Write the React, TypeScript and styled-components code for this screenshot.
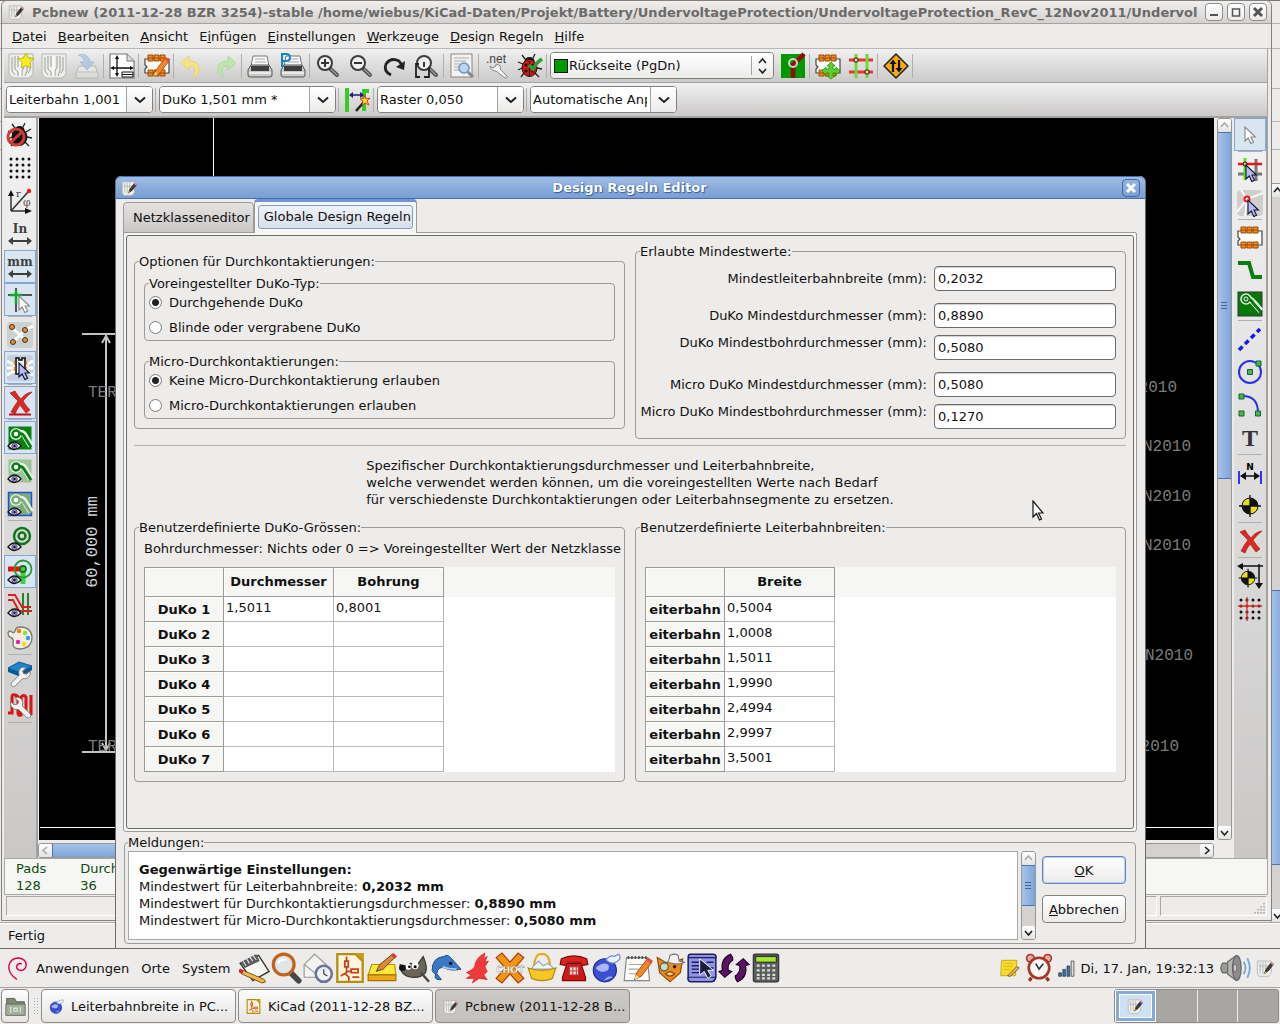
import React from "react";
import styled, { createGlobalStyle, css } from "styled-components";

const Global = createGlobalStyle`
  * { box-sizing: border-box; }
  html, body { margin: 0; height: 100%; }
  body { font: 13px/17px "DejaVu Sans", sans-serif; color: #111; background: #edecea; overflow: hidden; }
  button, input, select { font: inherit; color: inherit; margin: 0; }
  button { padding: 0; }
`;

const line = "#9c9b99";

/* ---------- icon drawings ---------- */

const Svg = styled.svg<{ $size: number }>`
  width: ${(p) => p.$size}px;
  height: ${(p) => p.$size}px;
  flex: none;
  display: block;
  overflow: visible;
`;

const Cursor = ({ fill = "#bcbcf2", edge = "#111133", at = "translate(10 8)" }: { fill?: string; edge?: string; at?: string }) => (
  <path transform={at} d="M0 0v14l3.2-3 2.6 5.6 2.8-1.4L6 10h4.4z" fill={fill} stroke={edge} strokeWidth="1.1" />
);

const Eye = () => (
  <g>
    <path d="M1 21q6.500-8 13 0q-6.500 7-13 0z" fill="#fff" stroke="#111" strokeWidth="1.300" />
    <circle cx="7.500" cy="21" r="2.800" fill="#9a8fe8" stroke="#223" strokeWidth=".6" />
    <circle cx="7.500" cy="21" r="1.200" fill="#111" />
  </g>
);

const Footprint = () => (
  <g>
    <path d="M1 6h24v14H1v-4l2-2-2-2z" fill="#fff" stroke="#444" strokeWidth="1.200" />
    {[4, 10, 16].map((x) => (
      <g key={x} fill="#f58a1e" stroke="#9a4b05" strokeWidth="1">
        <path d={`M${x} 2h5v6h-5zM${x} 17h5v6h-5z`} />
        <path d={`M${x} 5h5M${x} 20h5`} />
      </g>
    ))}
  </g>
);

const Board = () => (
  <g>
    <path d="M1 1h24v20l-4 4H5l-4-4z" fill="#eeeeec" stroke="#b5b5b2" />
    <path d="M4 4v14l3 4M7 3v13l3 3v4M10 3v11M16 3v11l-2 4v5M19 3v15l-2 5M22 4v13l-2 3" fill="none" stroke="#9b9d99" strokeWidth="1" />
    <path d="M12.500 3v20" stroke="#fff" strokeWidth="1.500" />
  </g>
);

const Printer = () => (
  <g>
    <path d="M6 3h14l2 10H4z" fill="#fafafa" stroke="#777" />
    <path d="M8 6h10M8 9h11" stroke="#aaa" />
    <path d="M4 12h18l3 5v5q0 2-2 2H3q-2 0-2-2v-5z" fill="#c9cac7" stroke="#555" />
    <path d="M4 13h18v5H4z" fill="#3c3f3e" />
    <path d="M2 20h22" stroke="#f4f4f4" strokeWidth="1.500" />
  </g>
);

const Lens = ({ children }: { children?: React.ReactNode }) => (
  <g>
    <path d="M14.500 15L22 22" stroke="#4a4d4b" strokeWidth="4" strokeLinecap="round" />
    <path d="M16 16l6 6" stroke="#999" strokeWidth="1.500" strokeLinecap="round" />
    <circle cx="10" cy="10" r="7" fill="#f1f1f0" stroke="#3a3d3c" strokeWidth="2" />
    {children}
  </g>
);

const Bug = ({ body }: { body: string }) => (
  <g>
    <path d="M8 6L5 2M16 5l2-4M6 11L1 9M5 15l-4 2M7 20l-3 4M19 10l5-3M20 15l5 1M18 20l4 4" stroke="#222" strokeWidth="1.300" fill="none" />
    <ellipse cx="12.500" cy="8" rx="5" ry="4" fill="#111" />
    <ellipse cx="12.500" cy="15" rx="7.500" ry="8.500" fill={body} stroke="#111" />
    <path d="M12.500 8v15" stroke="#111" />
    <g fill="#111"><circle cx="9" cy="12" r="1.500" /><circle cx="16" cy="12" r="1.500" /><circle cx="9" cy="18" r="1.500" /><circle cx="16" cy="18" r="1.500" /></g>
  </g>
);

const Wrench = () => (
  <path d="M4 25q-3-1-1-4l9-9q-2-6 3-9 3-1 5 0l-4 4 1 3 4 1 4-4q1 5-3 8-3 2-6 1L7 25q-2 1-3 0z" fill="#f4f4f3" stroke="#777" />
);

const Zone = ({ bg, track, edge = "none" }: { bg: string; track: string; edge?: string }) => (
  <g>
    <rect x="1.500" y="1.500" width="23" height="23" fill={bg} stroke={edge} strokeWidth="1.500" />
    <path d="M12 8q4-1 6 3l6 10" fill="none" stroke="#e8f4e8" strokeWidth="6" />
    <circle cx="9" cy="9" r="6" fill="#e8f4e8" />
    <path d="M11 8q4 0 6 3l7 11" fill="none" stroke={track} strokeWidth="3" />
    <circle cx="9" cy="9" r="3.500" fill="#fff" stroke={track} strokeWidth="2.500" />
  </g>
);

const Sight = () => (
  <g>
    <circle cx="13" cy="13" r="8" fill="#111" />
    <path d="M13 5v8H5a8 8 0 018-8zM13 21v-8h8a8 8 0 01-8 8z" fill="#e6dd1f" />
    <path d="M13 2v22M2 13h22" stroke="#111" strokeWidth="1.300" />
    <circle cx="13" cy="13" r="8" fill="none" stroke="#111" />
  </g>
);

const RedCross = () => (
  <path d="M3 4l5-2q2 4 6 8Q18 4 25 3q-5 4-9 9 3 5 7 9l-4 3q-3-4-6-8-3 4-5 9l-4-2q3-6 7-11Q7 8 3 4z" fill="#d92b22" stroke="#a30d0b" strokeWidth=".6" />
);

const Arrows = ({ label }: { label: string }) => (
  <g>
    <text x="13" y="12" textAnchor="middle" fontFamily="DejaVu Serif, serif" fontWeight="700" fontSize="12" fill="#3c3f3e">{label}</text>
    <path d="M3 20h20" stroke="#3c3f3e" strokeWidth="2" />
    <path d="M6 16l-5 4 5 4zM20 16l5 4-5 4z" fill="#3c3f3e" />
  </g>
);

const Grid = ({ color = "#111" }: { color?: string }) => (
  <g fill={color}>
    {[4, 10, 16, 22].map((y) => [4, 10, 16, 22].map((x) => <circle key={`${x}-${y}`} cx={x} cy={y} r="1.500" />))}
  </g>
);

const Pencil = () => (
  <g>
    <path d="M10 23l2-6L21 5l4 3-9 12z" fill="#f4862a" stroke="#9a4b05" strokeWidth=".8" />
    <path d="M10 23l1-4 3 2z" fill="#f7deb0" />
    <path d="M20 6l2-2 4 3-2 2z" fill="#e34a4a" />
  </g>
);

const glyphs: Record<string, React.ReactNode> = {
  newBoard: <><Board /><path d="M18 0l2.500 5 5.500.5-4 4 1 5.500-5-2.500L13 15l1-5.500-4-4 5.500-.5z" fill="#f7ee22" stroke="#b9a900" strokeWidth=".8" /></>,
  openBoard: <Board />,
  save: <g opacity=".5"><path d="M5 13L2 20v5h22v-5l-3-7z" fill="#f2f2f0" stroke="#999" /><path d="M2 19h22v6H2z" fill="#e6e6e4" stroke="#aaa" /><path d="M4 2q10-3 12 7h4l-7 8-7-8h4q0-5-6-7z" fill="#8fb3e0" stroke="#6a92c4" strokeWidth=".8" /></g>,
  page: <><path d="M1 1h17l7 7v17H1z" fill="#fcfcfc" stroke="#777" strokeWidth="1.200" /><path d="M18 1v7h7" fill="#ddd" stroke="#777" /><path d="M8 4v18M3 15h20" stroke="#111" strokeWidth="1.300" /><path d="M6 6l2-4 2 4zM6 20l2 4 2-4zM5 13l-4 2 4 2zM21 13l4 2-4 2z" fill="#111" /><path d="M13 19h11v5H13zM13 21.500h11" fill="#fff" stroke="#111" /></>,
  moduleEdit: <><Footprint /><Pencil /></>,
  undo: <path d="M10 3L2 10l8 7v-4q7-1 6 6 0 3-3 5 7-1 7-8 0-8-10-8z" fill="#f7e48a" stroke="#e6cc6a" strokeWidth=".8" />,
  redo: <path d="M16 3l8 7-8 7v-4q-7-1-6 6 0 3 3 5-7-1-7-8 0-8 10-8z" fill="#bfe6b0" stroke="#a4d68e" strokeWidth=".8" />,
  print: <Printer />,
  plot: <><Printer /><path d="M2 14V1h4q4 0 4 3.500T6 8H3" fill="none" stroke="#1583c4" strokeWidth="2" /></>,
  zoomIn: <Lens><path d="M6 10h8M10 6v8" stroke="#333" strokeWidth="2" /></Lens>,
  zoomOut: <Lens><path d="M6 10h8" stroke="#333" strokeWidth="2" /></Lens>,
  refresh: <><path d="M10 22Q2 18 5 11q5-7 13-3l3 4" fill="none" stroke="#222" strokeWidth="2.800" /><path d="M24 8l-1 9-8-3z" fill="#222" /></>,
  zoomFit: <><Lens /><path d="M10 14V9M5 11H2v13h4M10 24h5V14" fill="none" stroke="#222" strokeWidth="1.800" /></>,
  find: <><rect x="2" y="1" width="21" height="23" fill="#f2f2f1" stroke="#888" /><path d="M5 5h15M5 8h12M5 11h6M5 14h5M5 17h5" stroke="#aaa" /><circle cx="15" cy="15" r="5" fill="#bcd6f2" stroke="#6f93bd" strokeWidth="1.500" /><path d="M19 19l5 5" stroke="#888" strokeWidth="3" /></>,
  netlist: <><text x="12" y="10" textAnchor="middle" fontFamily="Liberation Sans, sans-serif" fontSize="12" fill="#444">.net</text><path d="M21 25L12 18q-5 0-6-5l3 2 3-2v-2q6 1 4 5l7 7q1 2-2 2z" fill="#f4f4f3" stroke="#888" /></>,
  drc: <><Bug body="#d4180f" /><path d="M12 12l4 4q3-6 9-10" fill="none" stroke="#2d9e33" strokeWidth="3.500" /></>,
  layerPair: <><rect x="1" y="1" width="24" height="24" fill="#009a00" /><path d="M24 1L13 12v13" fill="none" stroke="#9a0a0a" strokeWidth="4.500" /><circle cx="13" cy="10" r="4" fill="none" stroke="#cdd4cd" strokeWidth="2" /></>,
  modMode: <><Footprint /><path d="M16 9l4 4h-2v3h3v-2l4 4-4 4v-2h-3v3h2l-4 3-4-3h2v-3h-3v2l-4-4 4-4v2h3v-3h-2z" fill="#5ad12c" stroke="#2c8a12" strokeWidth=".8" /></>,
  trackMode: <><path d="M1 7h24M1 19h24" stroke="#f23030" strokeWidth="2.800" /><path d="M8 1v24M19 1v24" stroke="#69dd37" strokeWidth="3" /><circle cx="8" cy="7" r="2.200" fill="#f7c98a" stroke="#111" /><circle cx="19" cy="19" r="2.200" fill="#f7c98a" stroke="#111" /></>,
  sign: <><path d="M13 1l12 12-12 12L1 13z" fill="#f5a914" stroke="#222" strokeWidth="1.500" strokeLinejoin="round" /><path d="M10 19V10M16 7v9" stroke="#111" strokeWidth="2.200" /><path d="M6.500 11L10 6.500l3.500 4.500zM12.500 15l3.500 4.500 3.500-4.500z" fill="#111" /></>,
  autoWidth: <><path d="M3 1v24" stroke="#3acb1e" strokeWidth="4" /><path d="M25 4h-5v20" fill="none" stroke="#3acb1e" strokeWidth="4" /><path d="M6 8h12" stroke="#1b1b8a" strokeWidth="1.500" /><path d="M9 5L5 8l4 3zM16 5l4 3-4 3z" fill="#1b1b8a" /><path d="M12 24l7-8" stroke="#222" strokeWidth="2.500" /><path d="M21 8l1 4 4-1-3 3 2 4-4-2-3 2 1-4-3-2 4-1z" fill="#fbe13a" stroke="#e23b13" /></>,

  drcOff: <><Bug body="#111" /><circle cx="9" cy="15" r="8" fill="none" stroke="#cf3a36" strokeWidth="3" /><path d="M4 20L15 10" stroke="#cf3a36" strokeWidth="3" /></>,
  grid: <Grid />,
  polar: <><path d="M4 23V6M4 23h16M4 23L21 4" stroke="#333" strokeWidth="1.500" fill="none" /><path d="M1 8l3-6 3 6zM18 20l7 3-7 3z" fill="#111" /><circle cx="22" cy="3" r="2.200" fill="#f11" /><text x="9" y="9" fontSize="10" fontFamily="DejaVu Serif, serif" fill="#444">r</text><text x="16" y="18" fontSize="11" fontFamily="DejaVu Serif, serif" fill="#654">φ</text></>,
  inch: <Arrows label="In" />,
  mm: <Arrows label="mm" />,
  cursorShape: <><path d="M9 1v24M1 8h24" stroke="#555" strokeWidth="2" /><path d="M9 3v14M3 8h12" stroke="#17a52c" strokeWidth="2.500" /><Cursor fill="#fff" edge="#888" at="translate(12 9)" /></>,
  ratsnest: <><rect width="26" height="26" rx="4" fill="#c9d2d0" /><path d="M5 6l8 7 5-5M6 20l7-7 5 5M18 8l8-4M13 13l5 5" fill="none" stroke="#fff" strokeWidth="2.800" /><g fill="#f58a1e" stroke="#333"><circle cx="5" cy="5" r="2.500" /><circle cx="18" cy="8" r="2.500" /><circle cx="6" cy="20" r="2.500" /><circle cx="18" cy="18" r="2.500" /></g></>,
  modRats: <><rect width="26" height="26" rx="4" fill="#c6cfdd" /><path d="M0 6l26 14M0 13h26M0 20L26 6" fill="none" stroke="#fff" strokeWidth="3" /><path d="M9 3h3v2h3V3h3v16H9z" fill="#e9edf4" stroke="#111" strokeWidth="1.600" /><path d="M7.500 6v11M19.500 6v8" stroke="#f58a1e" strokeWidth="1.500" strokeDasharray="4 2" /><Cursor at="translate(12 8)" /></>,
  autoDel: <><g transform="translate(0 -1)"><RedCross /></g><path d="M2 24.500h22" stroke="#c01010" strokeWidth="2" /></>,
  zoneFill: <><Zone bg="#0a8212" track="#0a8212" /><Eye /></>,
  zoneHide: <><Zone bg="#9cc49c" track="#0a7a12" /><Eye /></>,
  zoneOutline: <><Zone bg="#7aad7a" track="#7aad7a" edge="#2450d6" /><Eye /></>,
  padSketch: <><circle cx="15" cy="10" r="8" fill="none" stroke="#12761a" strokeWidth="2.500" /><circle cx="15" cy="10" r="3.500" fill="none" stroke="#12761a" strokeWidth="2.500" /><Eye /></>,
  viaSketch: <><path d="M1 10h12" stroke="#f30d0d" strokeWidth="5" /><path d="M16 11v14" stroke="#3bd344" strokeWidth="5" /><circle cx="16" cy="10" r="8.500" fill="none" stroke="#2a9a38" strokeWidth="1.800" /><circle cx="16" cy="10" r="3" fill="#3bd344" stroke="#12761a" strokeWidth="1.800" /><Eye /></>,
  trackSketch: <><path d="M16 1v22M21 1v22" stroke="#167a1c" strokeWidth="1.800" /><path d="M1 3h7l7 12h9M1 8h5l6 11h13" fill="none" stroke="#d9201c" strokeWidth="1.800" /><Eye /></>,
  palette: <><path d="M13 2q11 0 12 10 0 11-12 12-7 0-7-5 1-4-1-6-4-1-4-5 1-3 4-1 2 2 3-1 1-4 5-4z" fill="#f3efe2" stroke="#777" strokeWidth="1.300" /><circle cx="12" cy="6" r="2.200" fill="#f57900" /><circle cx="18" cy="8" r="2.200" fill="#8ae234" /><circle cx="21" cy="13" r="2.200" fill="#28a0e8" /><circle cx="17" cy="19" r="2.200" fill="#f5d90a" /><circle cx="11" cy="17" r="2.200" fill="#ee15b8" /></>,
  layers: <><path d="M1 8l11-6 13 4-11 7z" fill="#1a86cf" stroke="#0d5a90" /><path d="M1 8l13 5 11-7v4l-11 7L1 12z" fill="#0d5a90" /><g transform="translate(2 5) scale(.85)"><Wrench /></g></>,
  tracksTool: <><path d="M1 20h4V4q0-3 3-2t3 2v16q0 3 3 2V4q3-3 5 0v16q1 3 5 1V2" fill="none" stroke="#d91414" strokeWidth="3" /><g transform="translate(26 2) scale(-.9 .9)"><Wrench /></g></>,

  select: <Cursor fill="#fff" edge="#888" at="translate(8 5)" />,
  hilite: <><path d="M19 2v22M1 17h24" stroke="#777" strokeWidth="3" /><path d="M8 1v22" stroke="#4fe61a" strokeWidth="3" /><path d="M1 7h24" stroke="#f31010" strokeWidth="2.500" /><circle cx="8" cy="7" r="2" fill="#f7c98a" stroke="#111" /><Cursor at="translate(9 8)" /></>,
  localRats: <><rect width="26" height="26" rx="4" fill="#cfcfce" /><path d="M10 9L4 0M10 9l16-6M10 9L0 22M10 9l-2 17" stroke="#fff" strokeWidth="1.800" /><circle cx="10" cy="9" r="2.500" fill="#fff" stroke="#f01414" strokeWidth="2" /><Cursor at="translate(11 10)" /></>,
  addModule: <Footprint />,
  addTrack: <path d="M1 5h11l4 14h9" fill="none" stroke="#0b7d12" strokeWidth="4" />,
  addZone: <><rect x="1" y="1" width="24" height="24" fill="#067a08" stroke="#333" /><path d="M11 8q3 0 6 4l7 8" fill="none" stroke="#e8f4e8" strokeWidth="6" /><circle cx="9" cy="8" r="5" fill="#067a08" stroke="#e8f4e8" strokeWidth="1.500" /><path d="M10 8q4 0 6 4l8 9" fill="none" stroke="#067a08" strokeWidth="3" /><circle cx="9" cy="8" r="2" fill="#067a08" stroke="#fff" /></>,
  addLine: <path d="M2 24L23 3" stroke="#0f1fe8" strokeWidth="3.500" strokeDasharray="5 3.500" />,
  addCircle: <><circle cx="13" cy="13" r="11" fill="none" stroke="#2334e8" strokeWidth="2" /><g fill="#43b656" stroke="#1c5e27"><path d="M10.500 10.500h5v5h-5zM19 2h5v5h-5z" /></g></>,
  addArc: <><path d="M4 4q17-1 17 17" fill="none" stroke="#2334e8" strokeWidth="2" /><g fill="#43b656" stroke="#1c5e27"><path d="M2 2h5v5H2zM2 19h5v5H2zM18.500 19h5v5h-5z" /></g></>,
  addText: <text x="13" y="21" textAnchor="middle" fontFamily="Liberation Serif, serif" fontWeight="700" fontSize="24" fill="#333">T</text>,
  dimension: <><path d="M2 11v13M24 11v13" stroke="#3434ee" strokeWidth="2" /><path d="M4 16h18" stroke="#111" strokeWidth="1.500" /><path d="M9 12l-6 4 6 4zM17 12l6 4-6 4z" fill="#111" /><text x="13" y="10" textAnchor="middle" fontSize="9" fontWeight="700" fontFamily="DejaVu Sans, sans-serif">N</text></>,
  target: <Sight />,
  remove: <RedCross />,
  offset: <><g transform="translate(0 4) scale(.85)"><Sight /></g><path d="M3 3h23M22 1v22" stroke="#111" strokeWidth="1.500" /><path d="M6 0L0 3l6 4zM18 20l4 6 4-6z" fill="#111" /></>,
  gridOrigin: <><Grid /><path d="M1 10h24M10 1v24" stroke="#e62a2a" strokeWidth="1.300" /></>,

  pcbnew: <><path d="M2 3h20v17l-4 5H5l-3-4z" fill="#f0f0ee" stroke="#a5a5a2" /><path d="M6 5v16M10 4v18M14 4v18M4 10h14" stroke="#b9b9b6" strokeWidth="1.500" /><path d="M12 21l3-7 7-9 3 3-7 9z" fill="#3b3b39" stroke="#222" /><path d="M12 21l1-3 2 2z" fill="#f4d13b" /><path d="M21 6l2-2 3 2-2 3z" fill="#e28bb5" /></>,
  debian: <path d="M12 24Q3 18 4 10 6 2 14 2q8 1 8 7 0 5-5 6-5 0-5-4 1-4 5-3" fill="none" stroke="#d70751" strokeWidth="1.500" strokeLinecap="round" />,
  tomboy: <><path d="M1 9L17 2l9 14-14 8z" fill="#f7f7f5" stroke="#333" strokeWidth="1.200" /><path d="M1 8L15 1l3 6L5 13z" fill="#5a5a5a" /><path d="M3 6l3 5M6 4l3 5M9 3l3 4M12 2l3 4" stroke="#e4e4e4" /><path d="M1 14l21 9 1 2-3 1L2 18z" fill="#f2b84a" stroke="#7a4a10" strokeWidth=".8" /><path d="M0 14l4 1-1 3-3-1z" fill="#d22" /></>,
  magnify: <><path d="M17 17l7 7" stroke="#46484a" strokeWidth="5" strokeLinecap="round" /><circle cx="11" cy="10" r="9" fill="#dfe6ea" stroke="#c3641c" strokeWidth="2.800" /><path d="M6 9q2-4 7-3" stroke="#fff" strokeWidth="2" fill="none" /></>,
  mailClock: <><path d="M1 10l9-9 10 9v11H1z" fill="#f3f3f1" stroke="#999" /><path d="M1 10l9 7 10-7" fill="none" stroke="#999" /><circle cx="18" cy="18" r="7" fill="#f2f3f8" stroke="#6c7399" strokeWidth="2.200" /><path d="M18 14v4l3 2" stroke="#333" fill="none" /></>,
  kicad: <><path d="M2 1h16l6 6v18H2z" fill="#fff6dc" stroke="#b98c0b" strokeWidth="2" /><path d="M18 0h7v7z" fill="#c99a10" /><path d="M10 3v4M8.500 7h3v5h-3zM10 12v5l-5 3M10 16h4M14 14h6v3h-6zM9 18l3 3v3M15 21h6" fill="none" stroke="#c4411b" strokeWidth="1.500" /></>,
  notes: <><path d="M4 10h20l1 9H1z" fill="#fbe83a" stroke="#b39206" /><path d="M1 19h24v5H1z" fill="#f0a815" stroke="#a86f05" /><path d="M8 16l3-6L22 1l3 2-11 11z" fill="#d98a34" stroke="#6d3c0b" strokeWidth=".8" /><path d="M21 2l2-2 3 3-2 2z" fill="#e4343a" /></>,
  gimp: <><path d="M1 10q5 2 9-1l6 1 5-7q4 9 2 14-4 5-12 4-10-1-10-11z" fill="#6b6459" stroke="#38342e" /><circle cx="8" cy="12" r="2.600" fill="#fff" /><circle cx="14" cy="11" r="3" fill="#fff" /><circle cx="9" cy="12" r="1.200" /><circle cx="14" cy="12" r="1.300" /><ellipse cx="3" cy="13" rx="3" ry="2.500" fill="#111" /><path d="M19 17l7 8" stroke="#444" strokeWidth="2" /></>,
  dolphin: <><path d="M1 15Q1 4 11 3q3-2 5 0 3 3 10 11-9 2-14-1-6-2-7 5l4 5q-7 1-5-5-2 0-3-3z" fill="#3a78c8" stroke="#1c4580" strokeWidth=".8" /><path d="M10 12q5 2 12 2" fill="none" stroke="#a9c9ee" strokeWidth="1.500" /><circle cx="17" cy="9" r="1.500" fill="#111" /></>,
  eagle: <path d="M19 0l-1 5 3-2-2 5 3-1-3 5 2 4-3 3 3 4-7-1-6 4 2-4-7 0 4-3-4-2q5-2 7-5Q11 4 19 0z" fill="#ee3b39" stroke="#c9201f" strokeWidth=".6" />,
  xcross: <><path d="M1 4l5-4 7 8 7-8 5 4-8 9 8 9-5 4-7-8-7 8-5-4 8-9z" fill="#f79412" stroke="#ad3a02" /><text x="13" y="17" textAnchor="middle" fontSize="8" fontWeight="700" fontFamily="DejaVu Sans, sans-serif" fill="#fff" stroke="#777" strokeWidth=".3">CHOT</text></>,
  basket: <><path d="M6 12Q7 0 13 1q6-1 7 10" fill="none" stroke="#e0a81c" strokeWidth="1.800" /><path d="M5 12l5-5 4 4 4-2 6 5H4z" fill="#f4f7fa" stroke="#8aa6c4" /><path d="M1 13q12 4 24 0l-3 9q-9 4-18 0z" fill="#f7c72a" stroke="#b98509" /></>,
  phone: <><path d="M2 5q11-5 22 0l1 5-6 1-1-3H8l-1 3-6-1z" fill="#dd2222" stroke="#7b0808" /><path d="M7 9h12l4 12v3H3v-3z" fill="#cf1717" stroke="#7b0808" /><path d="M9 12h8v7H9zM12 12v7M15 12v7M9 15.500h8" fill="#f7d9d9" stroke="#a33" strokeWidth=".8" /></>,
  globe: <><circle cx="12" cy="15" r="10" fill="#3b4fd2" stroke="#1c2a8c" /><path d="M4 13q6-6 11-3 2 5-3 6-5 1-8-3zM11 24q4-5 8-3" fill="#aab8f8" /><path d="M13 6q4-5 7-3l4-2q3 4-1 6-5 4-10-1z" fill="#eef4ff" stroke="#6f86d8" /></>,
  notepad: <><path d="M3 4h18l2 20H1z" fill="#fbfbfa" stroke="#888" /><path d="M4 4h17" stroke="#444" strokeWidth="2.500" strokeDasharray="1.500 1.500" /><path d="M5 10h12M5 14h9M5 18h7" stroke="#aaa" /><Pencil /></>,
  cat: <><path d="M2 4l7 4h7l8-3-2 12-9 8-9-8z" fill="#ec8b1d" stroke="#8e4805" /><path d="M12 6l1-4q4-2 7 0l1 5q4 1 5 1-6 3-15 0z" fill="#f1f1ef" stroke="#777" /><circle cx="8" cy="12" r="3.500" fill="#bfe0c2" stroke="#555" /><circle cx="17" cy="12" r="1.500" fill="#222" /><path d="M9 18q4 4 8 0l-4-2z" fill="#fbd7a0" stroke="#8e4805" /></>,
  scroll: <><path d="M3 1h20q3 1 2 4v16q-1 4-4 4H3q-3-1-2-5V4q0-3 2-3z" fill="#8f93ee" stroke="#1c1e55" strokeWidth="1.300" /><path d="M1 4h24M1 21h24" stroke="#1c1e55" /><path d="M4 8h7M4 11h7M4 14h7M4 17h7M17 8h6M19 13h4" stroke="#1c1e55" strokeWidth="1.200" /><path d="M11 5v14l4-3 3 6 3-2-3-5h5z" fill="#1c1c3c" stroke="#fff" strokeWidth=".8" /></>,
  cycle: <><path d="M10 1Q1 5 3 15l-3 1 5 5 6-5-3-1q-1-6 4-9 0-3-2-5z" fill="#5a1266" stroke="#1e0324" /><path d="M16 25q9-4 7-14l3-1-5-5-6 5 3 1q1 6-4 9 0 3 2 5z" fill="#5a1266" stroke="#1e0324" /></>,
  calc: <><rect x="2" y="1" width="22" height="24" rx="2" fill="#5b5f5c" stroke="#2d2f2e" /><rect x="4" y="3" width="18" height="5" fill="#a2e832" stroke="#333" />{[11, 15, 19, 22].map((y) => <path key={y} d={`M5 ${y}h16`} stroke="#dcdcda" strokeWidth="2" strokeDasharray="2.500 2" />)}</>,

  sticky: <><path d="M2 3h20l-2 20H1z" fill="#f7dc2c" stroke="#b79b0a" /><path d="M5 7h12M5 11h11M5 15h9" stroke="#c2a31a" strokeDasharray="3 1" /><path d="M10 23l12-12 3 2-12 11z" fill="#e6b877" stroke="#5f4011" /></>,
  alarm: <><path d="M6 22l-2 3M20 22l2 3" stroke="#9c2b20" strokeWidth="3" /><circle cx="5" cy="4" r="3.500" fill="#f0a9a0" stroke="#a8372c" strokeWidth="1.500" /><circle cx="21" cy="4" r="3.500" fill="#f0a9a0" stroke="#a8372c" strokeWidth="1.500" /><circle cx="13" cy="13" r="9.500" fill="#f8f8f6" stroke="#a8372c" strokeWidth="2.500" /><path d="M10 9l3 5 4-5" fill="none" stroke="#333" strokeWidth="1.500" /></>,
  signal: <g stroke="#333"><path d="M1 20h4v5H1zM7 15h4v10H7z" fill="#3b6fb8" /><path d="M13 10h4v15h-4z" fill="#3b6fb8" /><path d="M19 3h4v22h-4z" fill="#ddd" /></g>,
  speaker: <><path d="M3 9q-3 4 0 8h4V9z" fill="#9b9c9a" stroke="#666" /><path d="M7 8l7-5q5 10 0 20l-7-5z" fill="#b3b4b2" stroke="#6d6e6c" /><ellipse cx="14.500" cy="13" rx="3.500" ry="10" fill="#8c8d8b" stroke="#666" /><ellipse cx="13" cy="13" rx="1.500" ry="3" fill="#ccc" stroke="#555" strokeWidth=".6" /><path d="M20 8q3 5 0 10M23 5q4 8 0 16" fill="none" stroke="#7aa6dc" strokeWidth="1.500" /></>,
  folder: <><path d="M2 3h10l2 4h10v16H2z" fill="#7f8875" stroke="#4d5446" /><path d="M1 10h24v14H1z" fill="#a3ad99" stroke="#5c6454" /><path d="M8 14h-1v6h1M18 14h1v6h-1M11 15h4v4h-4z" fill="none" stroke="#e9ece6" strokeWidth="1.300" /></>,
};

const Icon = ({ name, size = 26 }: { name: string; size?: number }) => (
  <Svg $size={size} viewBox="0 0 26 26" aria-hidden="true">{glyphs[name]}</Svg>
);

/* ---------- shared controls ---------- */

const Desktop = styled.div`
  height: 100vh;
  display: grid;
  grid-template-rows: minmax(0, 1fr) auto auto;
`;

const Workspace = styled.div`
  position: relative;
  overflow: hidden;
`;

const Bar = styled.div<{ $vertical?: boolean }>`
  flex: none;
  display: flex;
  flex-direction: ${(p) => (p.$vertical ? "column" : "row")};
  ${(p) => (p.$vertical ? "width" : "height")}: 15px;
  background: #d3d2d0;
  border: 1px solid #979694;
  border-radius: 3px;
`;

const BarButton = styled.button<{ $off?: boolean }>`
  flex: none;
  width: 13px;
  height: 13px;
  display: grid;
  place-items: center;
  border: 0;
  border-radius: 2px;
  background: linear-gradient(#fff, #e4e3e2);
  color: ${(p) => (p.$off ? "#aaa" : "#222")};
`;

const Thumb = styled.div<{ $vertical?: boolean; $share: number }>`
  flex: 0 0 ${(p) => p.$share}%;
  display: grid;
  place-items: center;
  color: #3f6599;
  border: 0 solid #4f76ab;
  border-width: ${(p) => (p.$vertical ? "1px 0" : "0 1px")};
  background: linear-gradient(${(p) => (p.$vertical ? "90deg" : "180deg")}, #a5c3ea, #7ea5d8);
`;

const Track = styled.div<{ $vertical?: boolean }>`
  flex: 1;
  min-height: 0;
  min-width: 0;
  display: flex;
  flex-direction: ${(p) => (p.$vertical ? "column" : "row")};
`;

const arrowPaths = { up: "M1 6l3.500-4L8 6", down: "M1 3l3.500 4L8 3", left: "M6 1L2 4.500 6 8", right: "M3 1l4 3.500L3 8" };

const Arrow = ({ dir }: { dir: keyof typeof arrowPaths }) => (
  <Svg $size={9} viewBox="0 0 9 9" aria-hidden="true">
    <path d={arrowPaths[dir]} fill="none" stroke="currentColor" strokeWidth="1.600" />
  </Svg>
);

const ScrollBar = ({ vertical, share }: { vertical?: boolean; share: number }) => (
  <Bar $vertical={vertical}>
    <BarButton type="button" $off aria-label={vertical ? "Nach oben" : "Nach links"}><Arrow dir={vertical ? "up" : "left"} /></BarButton>
    <Track $vertical={vertical}>
      <Thumb $vertical={vertical} $share={share}>
        {vertical && <Svg $size={7} viewBox="0 0 7 7"><path d="M0 .5h6M0 3.500h6M0 6.500h6" stroke="currentColor" /></Svg>}
      </Thumb>
    </Track>
    <BarButton type="button" aria-label={vertical ? "Nach unten" : "Nach rechts"}><Arrow dir={vertical ? "down" : "right"} /></BarButton>
  </Bar>
);

/* ---------- browser window at the back ---------- */

const BackWindow = styled.div`
  position: absolute;
  inset: 0;
  display: flex;
  flex-direction: column;
  background: #edecea;
  border-top: 1px solid #777;
`;
const BackHead = styled.div`
  height: 182px;
  display: grid;
  grid-template-rows: 23px 25px 40px 33px 28px 1fr;
  > div { border-bottom: 1px solid #b5b4b2; }
  > div:last-child { border: 0; }
`;
const BackBody = styled.div`
  flex: 1;
  min-height: 0;
  display: flex;
  justify-content: flex-end;
  margin-right: -5px;
`;
const BackTrack = styled.div`
  flex: 1;
  display: grid;
  grid-template-rows: 394fr 275fr 44fr;
`;
const BackStatus = styled.div`
  height: 25px;
  padding: 3px 8px;
  border-top: 1px solid #fff;
  outline: 1px solid #a8a7a5;
`;

/* ---------- Pcbnew window ---------- */

const MainWindow = styled.section`
  position: absolute;
  inset: 0 8px 27px 1px;
  display: flex;
  flex-direction: column;
  background: #edecea;
  border: 1px solid #82817f;
  border-radius: 6px 6px 0 0;
`;

const TitleBar = styled.header`
  flex: none;
  height: 23px;
  display: flex;
  align-items: center;
  gap: 4px;
  padding: 0 4px 0 6px;
  border-bottom: 1px solid #a3a2a0;
  border-radius: 6px 6px 0 0;
  background: linear-gradient(#f0efee, #d3d2d0);
`;

const TitleText = styled.h1`
  flex: 1;
  margin: 0 0 0 4px;
  overflow: hidden;
  white-space: nowrap;
  font-size: 13px;
  line-height: 17px;
  font-weight: 700;
  color: #6b6a69;
`;

const FrameButton = styled.button<{ $blue?: boolean }>`
  flex: none;
  width: 18px;
  height: 18px;
  display: grid;
  place-items: center;
  border: 1px solid ${(p) => (p.$blue ? "#44699f" : "#8d8c8a")};
  border-radius: 4px;
  background: ${(p) => (p.$blue ? "linear-gradient(#94b5e2, #7ba0d3)" : "linear-gradient(#fff, #ecebea)")};
  color: ${(p) => (p.$blue ? "#fff" : "#555")};
`;

const MenuBar = styled.nav`
  flex: none;
  height: 25px;
  display: flex;
  align-items: center;
  gap: 11px;
  padding: 0 10px;
  border-bottom: 1px solid #b9b8b6;
`;

const MenuLink = styled.button`
  border: 0;
  background: none;
  line-height: 17px;
`;

const ToolBar = styled.div<{ $last?: boolean }>`
  flex: none;
  height: ${(p) => (p.$last ? 35 : 34)}px;
  display: flex;
  align-items: center;
  margin: 0 3px 0 2px;
  border: solid #a3a2a0;
  border-width: 0 1px ${(p) => (p.$last ? 2 : 1)}px 0;
  background: linear-gradient(#f1f0f0, #cbcac9);
`;

const ToolColumn = styled.div`
  flex: none;
  width: 34px;
  display: flex;
  flex-direction: column;
  border-right: 2px solid #a3a2a0;
  background: linear-gradient(#f3f2f2, #c9c8c7);
`;

const ToolButton = styled.button<{ $on?: boolean; $column?: boolean }>`
  flex: none;
  width: ${(p) => (p.$column ? 32 : 33)}px;
  height: 33px;
  display: grid;
  place-items: center;
  border: 1px solid transparent;
  background: none;
  ${(p) => p.$on && css`border-color: #83a8d8; background: #dae5f2;`}
`;

const Separator = styled.div<{ $column?: boolean }>`
  flex: none;
  ${(p) =>
    p.$column
      ? css`height: 2px; margin: 0 4px; border-top: 1px solid #b0afad;`
      : css`width: 2px; height: 24px; border-left: 1px solid #b0afad;`}
`;

const ComboFrame = styled.div<{ $width: number }>`
  flex: none;
  display: grid;
  width: ${(p) => p.$width}px;
  height: 27px;
  margin: 0 2px;
  border: 1px solid #82817f;
  border-radius: 4px;
  overflow: hidden;
  background: #fff;
  > * { grid-area: 1 / 1; }
`;

const ComboSelect = styled.select<{ $flat?: boolean }>`
  appearance: none;
  width: 100%;
  min-width: 0;
  border: 0;
  outline: 0;
  border-radius: 0;
  padding: 0 29px 0 ${(p) => (p.$flat ? 18 : 2)}px;
  background: ${(p) => (p.$flat ? "linear-gradient(#fff, #ecebea)" : "#fff")};
`;

const ComboArrow = styled.span<{ $flat?: boolean }>`
  justify-self: end;
  width: ${(p) => (p.$flat ? 22 : 26)}px;
  margin: ${(p) => (p.$flat ? 3 : 0)}px 0;
  display: grid;
  place-items: center;
  align-content: center;
  pointer-events: none;
  border-left: 1px solid #a3a2a0;
  background: ${(p) => (p.$flat ? "none" : "linear-gradient(#fff, #ecebea)")};
  color: #222;
`;

const Swatch = styled.span`
  width: 14px;
  height: 14px;
  margin-left: 3px;
  align-self: center;
  border: 1px solid #111;
  background: #009a00;
  pointer-events: none;
  z-index: 1;
`;

const Combo = ({ label, value, width }: { label: string; value: string; width: number }) => (
  <ComboFrame $width={width}>
    <ComboSelect aria-label={label}><option>{value}</option></ComboSelect>
    <ComboArrow>
      <Svg $size={12} viewBox="0 0 12 12"><path d="M1 3.500l5 4.500 5-4.500" fill="none" stroke="currentColor" strokeWidth="2" /></Svg>
    </ComboArrow>
  </ComboFrame>
);

const Work = styled.div`
  flex: 1;
  min-height: 0;
  display: flex;
  margin: 0 3px 0 2px;
`;

const CanvasArea = styled.div`
  flex: 1;
  min-width: 0;
  display: grid;
  grid-template-columns: minmax(0, 1fr) 15px;
  grid-template-rows: minmax(0, 1fr) 15px;
  gap: 3px;
  margin-right: 2px;
  > div { min-height: 0; }
`;

const Canvas = styled.div`
  position: relative;
  overflow: hidden;
  background: #000;
  margin-left: 1px;
`;

const Stroke = styled.i<{ $x: number; $y: number; $w?: number; $h?: number; $dim?: boolean }>`
  position: absolute;
  left: ${(p) => p.$x}px;
  top: ${(p) => p.$y}px;
  width: ${(p) => (p.$w ? `${p.$w}px` : "calc(100% - 1px)")};
  height: ${(p) => p.$h ?? 1}px;
  background: ${(p) => (p.$dim ? "#c4c4c4" : "#fff")};
`;

const CanvasText = styled.span<{ $y: number; $left?: number; $right?: number; $up?: boolean }>`
  position: absolute;
  top: ${(p) => p.$y}px;
  ${(p) => (p.$left !== undefined ? `left: ${p.$left}px;` : `right: ${p.$right}px;`)}
  font: 16px/20px "Liberation Mono", monospace;
  color: #7c7c7c;
  white-space: nowrap;
  ${(p) => p.$up && css`writing-mode: vertical-rl; transform: rotate(180deg); color: #d0d0d0; font-size: 17px;`}
`;

const ArrowHead = styled.svg<{ $x: number; $y: number }>`
  position: absolute;
  left: ${(p) => p.$x}px;
  top: ${(p) => p.$y}px;
  width: 10px;
  height: 10px;
`;

const MessagePanel = styled.dl`
  flex: none;
  height: 37px;
  display: flex;
  gap: 34px;
  margin: 0 3px 0 2px;
  padding: 1px 11px;
  border: 1px solid #a9a8a6;
  background: #f6f6f4;
  color: #0d4a10;
  dt, dd { margin: 0; line-height: 17px; }
`;

const StatusBar = styled.div`
  flex: none;
  height: 25px;
  display: grid;
  grid-template-columns: 1fr 107px;
  gap: 3px;
  padding: 1px 4px 4px;
  > div {
    display: flex;
    justify-content: flex-end;
    align-items: flex-end;
    border: 1px solid;
    border-color: #a9a8a6 #fff #fff #a9a8a6;
  }
`;

type Tool = string | null;
const topTools: Tool[] = ["newBoard", "openBoard", "save", null, "page", null, "moduleEdit", null, "undo", "redo", null, "print", "plot", null, "zoomIn", "zoomOut", "refresh", "zoomFit", null, "find", null, "netlist", "drc", null];
const endTools: Tool[] = ["layerPair", null, "modMode", "trackMode", null, "sign", null];
const leftTools: Tool[] = ["drcOff", "grid", "polar", "inch", "*mm", "*cursorShape", null, "ratsnest", "*modRats", null, "*autoDel", null, "*zoneFill", "zoneHide", "zoneOutline", null, "padSketch", "*viaSketch", "trackSketch", "palette", null, "layers", "tracksTool", null];
const rightTools: Tool[] = ["*select", null, "hilite", "localRats", null, "addModule", "addTrack", "addZone", null, "addLine", "addCircle", "addArc", "addText", null, "dimension", "target", null, "remove", null, "offset", "gridOrigin"];

const Tools = ({ items, column }: { items: Tool[]; column?: boolean }) => (
  <>
    {items.map((item, i) => {
      if (!item) return <Separator key={i} $column={column} />;
      const on = item.startsWith("*");
      const name = item.replace("*", "");
      return (
        <ToolButton key={name} type="button" aria-label={name} $on={on} $column={column}>
          <Icon name={name} />
        </ToolButton>
      );
    })}
  </>
);

/* ---------- design rules dialog ---------- */

const Dialog = styled.section`
  position: absolute;
  inset: 176px 134px 0 115px;
  display: flex;
  flex-direction: column;
  border: solid #6d6c6b;
  border-width: 0 1px;
  border-radius: 6px 6px 0 0;
  background: #edecea;
`;

const DialogTitle = styled.header`
  flex: none;
  height: 23px;
  display: flex;
  align-items: center;
  padding: 0 5px;
  border: solid #456fa8;
  border-width: 1px 0;
  border-radius: 6px 6px 0 0;
  background: linear-gradient(#9fbce6, #789ed2);
  h2 {
    flex: 1;
    margin: 0;
    text-align: center;
    font-size: 13px;
    line-height: 17px;
    color: #fff;
    text-shadow: 0 0 1px #2c5591, 1px 1px 1px #3a62a0;
  }
`;

const Tabs = styled.div`
  flex: none;
  display: flex;
  align-items: flex-end;
  padding-left: 7px;
`;

const Tab = styled.button<{ $on?: boolean }>`
  height: ${(p) => (p.$on ? 34 : 31)}px;
  margin-bottom: -1px;
  padding: ${(p) => (p.$on ? "3px 3px 5px" : "0 3px 0 9px")};
  border: 1px solid ${line};
  border-radius: 4px 4px 0 0;
  background: linear-gradient(#e4e3e2, #c9c8c6);
  ${(p) => p.$on && css`
    border-bottom: 0;
    border-top: 3px solid #6f97cf;
    background: #f6f6f5;
    z-index: 1;
    span {
      display: block;
      padding: 2px 1px 3px 5px;
      border: 1px solid #7f9fc9;
      border-radius: 3px;
      background: linear-gradient(#eef2f8, #d9e0ea);
    }
  `}
`;

const Notebook = styled.div`
  flex: 1;
  min-height: 0;
  margin: 0 8px 0 7px;
  padding: 2px;
  display: flex;
  border: 1px solid ${line};
  border-radius: 0 2px 3px 3px;
  background: #f6f6f5;
`;

const Page = styled.div`
  flex: 1;
  min-width: 0;
  padding: 7px;
  border: 1px solid #6d6c6b;
  border-radius: 3px;
  background: #edecea;
`;

const Pair = styled.div<{ $center?: boolean }>`
  display: grid;
  grid-template-columns: repeat(2, minmax(0, 1fr));
  gap: 10px;
  align-items: ${(p) => (p.$center ? "center" : "stretch")};
`;

const Group = styled.fieldset<{ $inner?: boolean; $top?: number }>`
  min-width: 0;
  margin: 0;
  padding: ${(p) => p.$top ?? 0}px ${(p) => (p.$inner ? "4px 3px" : "9px 9px")};
  border: 1px solid ${line};
  border-radius: 4px;
  > legend {
    padding: 0;
    margin-left: ${(p) => (p.$inner ? 0 : -5)}px;
    line-height: 17px;
  }
`;

const Stack = styled.div`
  display: grid;
  gap: 12px;
`;

const RadioLabel = styled.label`
  display: flex;
  align-items: center;
  gap: 7px;
  height: 20px;
  & + & { margin-top: 5px; }
`;

const Radio = styled.input`
  appearance: none;
  width: 13px;
  height: 13px;
  border: 1px solid #7d7c7a;
  border-radius: 50%;
  background: #fff;
  &:checked { background: radial-gradient(circle, #222 0 3px, #fff 4px); }
`;

const Field = styled.div<{ $second?: boolean }>`
  display: flex;
  justify-content: flex-end;
  align-items: ${(p) => (p.$second ? "flex-start" : "center")};
  gap: 7px;
  margin-top: ${(p) => (p.$second ? 7 : 12)}px;
  white-space: nowrap;
  legend + & { margin-top: 0; }
  label { line-height: ${(p) => (p.$second ? 15 : 17)}px; }
`;

const TextInput = styled.input`
  flex: none;
  width: 182px;
  height: 25px;
  padding: 0 3px;
  border: 1px solid #6d6c6b;
  border-radius: 4px;
  background: #fff;
  box-shadow: inset 0 1px 1px #d0d0d0;
`;

const Rule = styled.hr`
  margin: 6px 0 11px;
  border: 0;
  border-top: 1px solid #b5b4b2;
`;

const Explanation = styled.p`
  width: fit-content;
  margin: 0 auto 11px;
`;

const Hint = styled.p`
  height: 17px;
  margin: 0 0 10px;
  white-space: nowrap;
`;

const Sheet = styled.div`
  background: linear-gradient(#f6f6f4 30px, #fff 30px);
`;

const Table = styled.table`
  table-layout: fixed;
  width: 0;
  border-collapse: separate;
  border-spacing: 0;
  border: solid ${line};
  border-width: 1px 0 0 1px;
  th, td {
    height: 25px;
    padding: 0;
    overflow: hidden;
    white-space: nowrap;
    border: solid #b9b8b6;
    border-width: 0 1px 1px 0;
  }
  thead th { height: 29px; padding: 0 0 2px; }
  th { border-color: ${line}; background: #f6f6f4; box-shadow: inset 1px 1px #fff; }
  td { background: #fff; padding: 0 2px 3px; }
`;

const DataTable = ({ columns, rows }: { columns: string[]; rows: string[][] }) => (
  <Sheet>
    <Table>
      <colgroup>
        <col width={79} />
        {columns.map((c) => <col key={c} width={110} />)}
      </colgroup>
      <thead>
        <tr><th />{columns.map((c) => <th key={c} scope="col">{c}</th>)}</tr>
      </thead>
      <tbody>
        {rows.map(([head, ...cells], i) => (
          <tr key={i}><th scope="row">{head}</th>{cells.map((c, j) => <td key={j}>{c}</td>)}</tr>
        ))}
      </tbody>
    </Table>
  </Sheet>
);

const Messages = styled.fieldset`
  flex: none;
  min-width: 0;
  margin: 2px 9px 4px 8px;
  padding: 0 9px 3px 3px;
  border: 1px solid ${line};
  border-radius: 4px;
  legend { padding: 0; line-height: 17px; }
`;

const MessageRow = styled.div`
  display: flex;
  gap: 3px;
`;

const MessageText = styled.div`
  flex: 1;
  height: 89px;
  padding: 9px 10px;
  overflow: hidden;
  border: 1px solid #a9a8a6;
  background: #fff;
  p { margin: 0; }
`;

const Actions = styled.div`
  display: flex;
  flex-direction: column;
  gap: 11px;
  padding: 5px 0 0 3px;
`;

const PushButton = styled.button<{ $default?: boolean }>`
  width: 84px;
  height: 28px;
  border: 1px solid ${(p) => (p.$default ? "#5f86bd" : "#82817f")};
  border-radius: 4px;
  background: linear-gradient(#fff, #ecebea);
  ${(p) => p.$default && css`box-shadow: inset 0 0 0 1px #b9cfec;`}
`;

const Pointer = styled.svg`
  position: absolute;
  left: 1032px;
  top: 500px;
  width: 12px;
  height: 22px;
`;

/* ---------- desktop panels ---------- */

const Panel = styled.nav`
  height: 39px;
  display: flex;
  align-items: center;
  gap: 8px;
  padding: 0 6px 0 5px;
  border-top: 1px solid #6d6c6b;
  background: #edecea;
`;

const PanelGroup = styled.div<{ $gap?: number }>`
  display: flex;
  align-items: center;
  gap: ${(p) => p.$gap ?? 0}px;
  &:last-child { margin-left: auto; }
`;

const PanelMenu = styled.button`
  display: flex;
  align-items: center;
  gap: 6px;
  border: 0;
  background: none;
`;

const Launcher = styled.button`
  width: 32px;
  height: 32px;
  display: grid;
  place-items: center;
  border: 0;
  background: none;
`;

const TaskBar = styled.footer`
  height: 37px;
  display: flex;
  align-items: center;
  gap: 2px;
  padding: 0 1px;
  border-top: 1px solid #a3a2a0;
  background: #edecea;
`;

const TaskButton = styled.button<{ $on?: boolean; $small?: boolean }>`
  flex: 0 1 ${(p) => (p.$small ? 28 : 195)}px;
  min-width: 0;
  height: 34px;
  display: flex;
  align-items: center;
  justify-content: ${(p) => (p.$small ? "center" : "flex-start")};
  gap: 7px;
  padding: 0 ${(p) => (p.$small ? 0 : 2)}px 0 ${(p) => (p.$small ? 0 : 7)}px;
  overflow: hidden;
  white-space: nowrap;
  border: 1px solid #8d8c8a;
  border-radius: 4px;
  background: ${(p) => (p.$on ? "linear-gradient(#cbc9c7, #c3c0bd)" : "linear-gradient(#fdfdfd, #e6e5e4)")};
`;

const Handle = styled.div`
  width: 5px;
  height: 18px;
  margin: 0 1px 0 2px;
  background: radial-gradient(circle, #a9a8a6 0 1px, transparent 1px) 0 0 / 3px 3px;
`;

const Switcher = styled.div`
  display: grid;
  grid-template-columns: repeat(4, 1fr);
  width: 165px;
  height: 34px;
  margin-left: auto;
  border: 1px solid #8d8c8a;
  border-radius: 3px;
  background: #a9a5a2;
  overflow: hidden;
`;

const Space = styled.button<{ $on?: boolean }>`
  display: grid;
  place-items: center;
  border: 0;
  border-left: 1px solid #edecea;
  background: none;
  &:nth-child(2) { border-left: 0; }
  ${(p) => p.$on && css`
    border: 1px solid #fff;
    background: #cfe0f5;
    box-shadow: inset 0 0 0 3px #86abd9, inset 0 0 0 4px #fff;
  `}
`;

const Menu = ({ text, at = 0 }: { text: string; at?: number }) => (
  <MenuLink type="button">{text.slice(0, at)}<u>{text[at]}</u>{text.slice(at + 1)}</MenuLink>
);

const minimums: [string, string, boolean][] = [
  ["Mindestleiterbahnbreite (mm):", "0,2032", false],
  ["DuKo Mindestdurchmesser (mm):", "0,8890", false],
  ["DuKo Mindestbohrdurchmesser (mm):", "0,5080", true],
  ["Micro DuKo Mindestdurchmesser (mm):", "0,5080", false],
  ["Micro DuKo Mindestbohrdurchmesser (mm):", "0,1270", true],
];

const viaRows = [1, 2, 3, 4, 5, 6, 7].map((n) => [`DuKo ${n}`, n === 1 ? "1,5011" : "", n === 1 ? "0,8001" : ""]);
const trackRows = ["0,5004", "1,0008", "1,5011", "1,9990", "2,4994", "2,9997", "3,5001"].map((v) => ["eiterbahn", v]);
const launchers = ["tomboy", "magnify", "mailClock", "kicad", "notes", "gimp", "dolphin", "eagle", "xcross", "basket", "phone", "globe", "notepad", "cat", "scroll", "cycle", "calc"];
const labels: [number, number][] = [[260, 37], [319, 23], [369, 23], [418, 23], [528, 21], [619, 35]];

const Cross = () => (
  <Svg $size={12} viewBox="0 0 12 12"><path d="M2 2l8 8M10 2l-8 8" stroke="currentColor" strokeWidth="3" /></Svg>
);

export default function App() {
  return (
    <Desktop>
      <Global />
      <Workspace>
        <BackWindow>
          <BackHead><div /><div /><div /><div /><div /><div /></BackHead>
          <BackBody>
            <Bar $vertical>
              <BarButton type="button" aria-label="Nach oben"><Arrow dir="up" /></BarButton>
              <BackTrack><span /><Thumb $vertical $share={100} /><span /></BackTrack>
              <BarButton type="button" aria-label="Nach unten"><Arrow dir="down" /></BarButton>
            </Bar>
          </BackBody>
          <BackStatus>Fertig</BackStatus>
        </BackWindow>

        <MainWindow>
          <TitleBar>
            <Icon name="pcbnew" size={16} />
            <TitleText>Pcbnew (2011-12-28 BZR 3254)-stable /home/wiebus/KiCad-Daten/Projekt/Battery/UndervoltageProtection/UndervoltageProtection_RevC_12Nov2011/Undervol</TitleText>
            <FrameButton type="button" aria-label="Minimieren"><Svg $size={12} viewBox="0 0 12 12"><path d="M2 9h8" stroke="currentColor" strokeWidth="2" /></Svg></FrameButton>
            <FrameButton type="button" aria-label="Maximieren"><Svg $size={12} viewBox="0 0 12 12"><path d="M2.500 3h7v7h-7zM2 3h8" fill="none" stroke="currentColor" strokeWidth="1.500" /></Svg></FrameButton>
            <FrameButton type="button" aria-label="Schließen"><Cross /></FrameButton>
          </TitleBar>
          <MenuBar>
            <Menu text="Datei" /><Menu text="Bearbeiten" /><Menu text="Ansicht" /><Menu text="Einfügen" at={1} />
            <Menu text="Einstellungen" /><Menu text="Werkzeuge" /><Menu text="Design Regeln" /><Menu text="Hilfe" />
          </MenuBar>
          <ToolBar>
            <Tools items={topTools} />
            <ComboFrame $width={224}>
              <Swatch />
              <ComboSelect $flat aria-label="Lage"><option>Rückseite (PgDn)</option></ComboSelect>
              <ComboArrow $flat><Arrow dir="up" /><Arrow dir="down" /></ComboArrow>
            </ComboFrame>
            <Tools items={endTools} />
          </ToolBar>
          <ToolBar $last>
            <Combo label="Leiterbahn" value="Leiterbahn 1,001" width={147} />
            <Separator />
            <Combo label="Durchkontaktierung" value="DuKo 1,501 mm *" width={177} />
            <Separator />
            <Tools items={["autoWidth", null]} />
            <Combo label="Raster" value="Raster 0,050" width={147} />
            <Separator />
            <Combo label="Zoom" value="Automatische Anpassung" width={147} />
          </ToolBar>
          <Work>
            <ToolColumn><Tools items={leftTools} column /></ToolColumn>
            <CanvasArea>
              <Canvas>
                <Stroke $x={174} $y={0} $w={1} $h={80} />
                <Stroke $x={43} $y={215} $w={60} $h={2} $dim />
                <Stroke $x={66} $y={217} $w={2} $h={416} $dim />
                <Stroke $x={43} $y={633} $w={60} $h={2} $dim />
                <ArrowHead $x={62} $y={216} viewBox="0 0 10 10"><path d="M1 9l4-7 4 7" fill="none" stroke="#c4c4c4" strokeWidth="2" /></ArrowHead>
                <ArrowHead $x={62} $y={624} viewBox="0 0 10 10"><path d="M1 1l4 7 4-7" fill="none" stroke="#c4c4c4" strokeWidth="2" /></ArrowHead>
                <Stroke $x={1} $y={709} />
                <CanvasText $left={49} $y={265}>TER</CanvasText>
                <CanvasText $left={49} $y={619}>TER</CanvasText>
                <CanvasText $left={44} $y={378} $up>60,000 mm</CanvasText>
                {labels.map(([y, right]) => <CanvasText key={y} $y={y} $right={right}>N2010</CanvasText>)}
              </Canvas>
              <ScrollBar vertical share={50} />
              <ScrollBar share={50} />
            </CanvasArea>
            <ToolColumn><Tools items={rightTools} column /></ToolColumn>
          </Work>
          <MessagePanel>
            <div><dt>Pads</dt><dd>128</dd></div>
            <div><dt>Durch</dt><dd>36</dd></div>
          </MessagePanel>
          <StatusBar>
            <div />
            <div><Svg $size={13} viewBox="0 0 13 13"><path d="M11 1v11M8 4v8M5 7v5M2 10v2" stroke="#a3a2a0" strokeWidth="1.500" strokeDasharray="1.500 1.500" /></Svg></div>
          </StatusBar>
        </MainWindow>

        <Dialog role="dialog" aria-labelledby="dialog-title">
          <DialogTitle>
            <Icon name="pcbnew" size={16} />
            <h2 id="dialog-title">Design Regeln Editor</h2>
            <FrameButton type="button" $blue aria-label="Dialog schließen"><Cross /></FrameButton>
          </DialogTitle>
          <Tabs role="tablist">
            <Tab type="button" role="tab" aria-selected="false">Netzklasseneditor</Tab>
            <Tab type="button" role="tab" aria-selected="true" $on><span>Globale Design Regeln</span></Tab>
          </Tabs>
          <Notebook>
            <Page>
              <Pair $center>
                <Group $top={5}>
                  <legend>Optionen für Durchkontaktierungen:</legend>
                  <Stack>
                    <Group $inner>
                      <legend>Voreingestellter DuKo-Typ:</legend>
                      <RadioLabel><Radio type="radio" name="via" defaultChecked />Durchgehende DuKo</RadioLabel>
                      <RadioLabel><Radio type="radio" name="via" />Blinde oder vergrabene DuKo</RadioLabel>
                    </Group>
                    <Group $inner>
                      <legend>Micro-Durchkontaktierungen:</legend>
                      <RadioLabel><Radio type="radio" name="micro" defaultChecked />Keine Micro-Durchkontaktierung erlauben</RadioLabel>
                      <RadioLabel><Radio type="radio" name="micro" />Micro-Durchkontaktierungen erlauben</RadioLabel>
                    </Group>
                  </Stack>
                </Group>
                <Group $top={6}>
                  <legend>Erlaubte Mindestwerte:</legend>
                  {minimums.map(([label, value, second], i) => (
                    <Field key={label} $second={second}>
                      <label htmlFor={`min-${i}`}>{label}</label>
                      <TextInput id={`min-${i}`} defaultValue={value} />
                    </Field>
                  ))}
                </Group>
              </Pair>
              <Rule />
              <Explanation>
                Spezifischer Durchkontaktierungsdurchmesser und Leiterbahnbreite,<br />
                welche verwendet werden können, um die voreingestellten Werte nach Bedarf<br />
                für verschiedenste Durchkontaktierungen oder Leiterbahnsegmente zu ersetzen.
              </Explanation>
              <Pair>
                <Group $top={4}>
                  <legend>Benutzerdefinierte DuKo-Grössen:</legend>
                  <Hint>Bohrdurchmesser: Nichts oder 0 =&gt; Voreingestellter Wert der Netzklasse</Hint>
                  <DataTable columns={["Durchmesser", "Bohrung"]} rows={viaRows} />
                </Group>
                <Group $top={4}>
                  <legend>Benutzerdefinierte Leiterbahnbreiten:</legend>
                  <Hint />
                  <DataTable columns={["Breite"]} rows={trackRows} />
                </Group>
              </Pair>
            </Page>
          </Notebook>
          <Messages>
            <legend>Meldungen:</legend>
            <MessageRow>
              <MessageText>
                <p><b>Gegenwärtige Einstellungen:</b></p>
                <p>Mindestwert für Leiterbahnbreite: <b>0,2032 mm</b></p>
                <p>Mindestwert für Durchkontaktierungsdurchmesser: <b>0,8890 mm</b></p>
                <p>Mindestwert für Micro-Durchkontaktierungsdurchmesser: <b>0,5080 mm</b></p>
              </MessageText>
              <ScrollBar vertical share={68} />
              <Actions>
                <PushButton type="button" $default><u>O</u>K</PushButton>
                <PushButton type="button"><u>A</u>bbrechen</PushButton>
              </Actions>
            </MessageRow>
          </Messages>
        </Dialog>
        <Pointer viewBox="0 0 12 22" aria-hidden="true">
          <path d="M1 1v16l3.500-3.500L7.500 20l2-1-3-6H11z" fill="#fff" stroke="#111" strokeWidth="1.200" />
        </Pointer>
      </Workspace>

      <Panel aria-label="Panel">
        <PanelGroup $gap={12}>
          <PanelMenu type="button"><Icon name="debian" size={25} />Anwendungen</PanelMenu>
          <PanelMenu type="button">Orte</PanelMenu>
          <PanelMenu type="button">System</PanelMenu>
        </PanelGroup>
        <PanelGroup>
          {launchers.map((name) => (
            <Launcher key={name} type="button" aria-label={name}><Icon name={name} size={30} /></Launcher>
          ))}
        </PanelGroup>
        <PanelGroup $gap={5}>
          <Icon name="sticky" size={20} />
          <Icon name="alarm" size={28} />
          <Icon name="signal" size={18} />
          <time>Di, 17. Jan, 19:32:13</time>
          <Icon name="speaker" size={32} />
          <Icon name="pcbnew" size={18} />
        </PanelGroup>
      </Panel>

      <TaskBar>
        <TaskButton type="button" $small aria-label="Schreibtisch anzeigen"><Icon name="folder" size={21} /></TaskButton>
        <Handle />
        <TaskButton type="button"><Icon name="globe" size={15} />Leiterbahnbreite in PC...</TaskButton>
        <TaskButton type="button"><Icon name="kicad" size={15} />KiCad (2011-12-28 BZ...</TaskButton>
        <TaskButton type="button" $on><Icon name="pcbnew" size={15} />Pcbnew (2011-12-28 B...</TaskButton>
        <Switcher>
          <Space type="button" $on aria-label="Arbeitsfläche 1"><Icon name="pcbnew" size={16} /></Space>
          <Space type="button" aria-label="Arbeitsfläche 2" />
          <Space type="button" aria-label="Arbeitsfläche 3" />
          <Space type="button" aria-label="Arbeitsfläche 4" />
        </Switcher>
      </TaskBar>
    </Desktop>
  );
}
